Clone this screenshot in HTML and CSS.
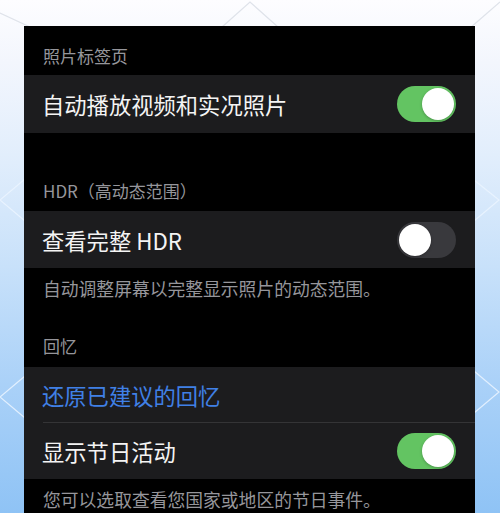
FILE: index.html
```html
<!DOCTYPE html>
<html lang="zh-CN">
<head>
<meta charset="utf-8">
<title>照片设置</title>
<link rel="stylesheet" href="styles.css">
</head>
<body>
<svg class="bg-pattern" viewBox="0 0 500 513" width="500" height="513" aria-hidden="true">
  <g class="lines-light">
    <polyline points="222,27 250,2 278,27"/>
    <line x1="0" y1="13" x2="30" y2="27"/>
    <line x1="500" y1="2" x2="470" y2="28"/>
  </g>
  <g class="lines-blue">
    <polyline points="25,179 0,200 25,221"/>
    <polyline points="25,376 0,397 25,418"/>
    <polyline points="474,180 499,200 474,221"/>
    <polyline points="474,371 499,392 474,413"/>
  </g>
</svg>
<main class="screen">
  <section class="section">
    <h2 class="section-header first">照片标签页</h2>
    <div class="group">
      <div class="row row-a">
        <span class="label">自动播放视频和实况照片</span>
        <span class="toggle on"><span class="knob"></span></span>
      </div>
    </div>
  </section>

  <section class="section">
    <h2 class="section-header gap-lg">HDR（高动态范围）</h2>
    <div class="group">
      <div class="row">
        <span class="label">查看完整 HDR</span>
        <span class="toggle off"><span class="knob"></span></span>
      </div>
    </div>
    <p class="section-footer">自动调整屏幕以完整显示照片的动态范围。</p>
  </section>

  <section class="section">
    <h2 class="section-header gap-md">回忆</h2>
    <div class="group">
      <div class="row row-c separated">
        <span class="label link">还原已建议的回忆</span>
      </div>
      <div class="row row-c">
        <span class="label">显示节日活动</span>
        <span class="toggle on"><span class="knob"></span></span>
      </div>
    </div>
    <p class="section-footer">您可以选取查看您国家或地区的节日事件。</p>
  </section>
</main>
</body>
</html>
```

FILE: styles.css
```css
html, body {
  margin: 0;
  padding: 0;
}

body {
  width: 500px;
  height: 513px;
  overflow: hidden;
  position: relative;
  background: linear-gradient(to bottom,
    #fdfdff 0%,
    #f3f6fd 12%,
    #e2eefc 30%,
    #c8e1fa 52%,
    #aad1f8 75%,
    #8fc3f5 100%);
  font-family: "Noto Sans CJK SC", "Noto Sans", sans-serif;
}

.bg-pattern {
  position: absolute;
  left: 0;
  top: 0;
  z-index: 0;
}

.bg-pattern polyline,
.bg-pattern line {
  fill: none;
  stroke-width: 1.2;
}

.lines-light polyline,
.lines-light line {
  stroke: #dfe3ea;
}

.lines-blue polyline {
  stroke: rgba(235, 244, 255, 0.85);
}

.screen {
  position: relative;
  z-index: 1;
  margin: 26px 0 0 24px;
  width: 451px;
  min-height: 487px;
  background: #000;
  color: #fff;
}

.section-header {
  margin: 0;
  padding: 0 19px 9px;
  font-size: 17px;
  line-height: 20px;
  font-weight: 400;
  color: #96969b;
}

.section-header.first {
  padding-top: 20px;
}

.section-header.gap-lg {
  padding-top: 48px;
  padding-bottom: 10px;
}

.section-header.gap-md {
  padding-top: 38px;
  padding-bottom: 11px;
}

.group {
  background: #1c1c1e;
}

.row {
  height: 57px;
  display: flex;
  align-items: center;
  justify-content: space-between;
  padding: 0 19px 0 18px;
  box-sizing: border-box;
  position: relative;
}

.row-a {
  height: 58px;
}

.row-c {
  height: 56px;
}

.row.separated::after {
  content: "";
  position: absolute;
  left: 19px;
  right: 0;
  bottom: 0;
  height: 1px;
  background: #343436;
}

.label {
  font-size: 22.3px;
  line-height: 26px;
  color: #f4f4f4;
  white-space: nowrap;
}

.label.link {
  color: #4080e6;
}

.toggle {
  width: 59px;
  height: 36px;
  border-radius: 18px;
  box-sizing: border-box;
  padding: 2px;
  display: flex;
  flex-shrink: 0;
}

.toggle.on {
  background: #63c462;
  justify-content: flex-end;
}

.toggle.off {
  background: #39393d;
  justify-content: flex-start;
}

.knob {
  width: 32px;
  height: 32px;
  border-radius: 50%;
  background: #fff;
  box-shadow: 0 1px 3px rgba(0, 0, 0, 0.25);
}

.section-footer {
  margin: 0;
  padding: 10px 19px 0;
  font-size: 17.8px;
  line-height: 20px;
  color: #96969b;
}
```
